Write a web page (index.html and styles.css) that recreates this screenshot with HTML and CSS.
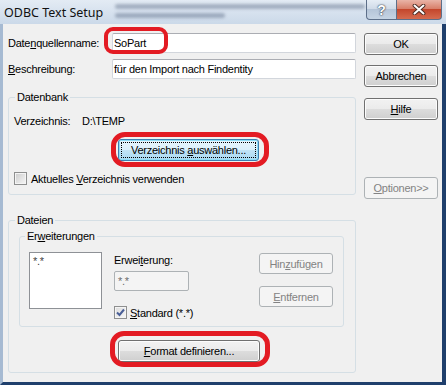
FILE: index.html
```html
<!DOCTYPE html>
<html lang="de">
<head>
    <meta charset="UTF-8">
    <title>ODBC Text Setup</title>
    <link rel="stylesheet" href="styles.css">
</head>
<body>
    <div class="window">
        <div class="titlebar">
            <span class="title">ODBC Text Setup</span>
            <div class="glass">
                <div class="smear wide"></div>
                <div class="smear short"></div>
            </div>
            <div class="caption-buttons">
                <div class="cap help">?</div>
                <div class="cap close">
                    <svg width="14" height="11" viewBox="0 0 14 11">
                        <path d="M2.5 1.5 L11.5 9.5 M11.5 1.5 L2.5 9.5" stroke="#4a2a22" stroke-width="3.8" stroke-linecap="round"/>
                        <path d="M2.5 1.5 L11.5 9.5 M11.5 1.5 L2.5 9.5" stroke="#fff" stroke-width="2" stroke-linecap="round"/>
                    </svg>
                </div>
            </div>
        </div>

        <div class="client">
            <div class="form">
                <div class="row">
                    <span class="label">Date<u>n</u>quellenname:</span>
                    <div class="edit marked name-mark">SoPart</div>
                </div>
                <div class="row second">
                    <span class="label"><u>B</u>eschreibung:</span>
                    <div class="edit">für den Import nach Findentity</div>
                </div>

                <fieldset class="group db">
                    <legend>Datenbank</legend>
                    <div class="dir-row">
                        <span class="dir-label">Verzeichnis:</span>
                        <span>D:\TEMP</span>
                    </div>
                    <div class="btn focus verz marked"><span>Verzeichnis <u>a</u>uswählen...</span></div>
                    <div class="check-row">
                        <span class="check"></span>
                        <span>Aktuelles <u>V</u>erzeichnis verwenden</span>
                    </div>
                </fieldset>

                <fieldset class="group files">
                    <legend>Dateien</legend>
                    <fieldset class="group ext">
                        <legend>Er<u>w</u>eiterungen</legend>
                        <div class="ext-body">
                            <div class="listbox">*.*</div>
                            <div class="ext-middle">
                                <div class="ext-label">Erwei<u>t</u>erung:</div>
                                <div class="edit disabled small">*.*</div>
                                <div class="check-row">
                                    <span class="check checked">
                                        <svg width="11" height="11" viewBox="0 0 11 11">
                                            <path d="M2 5.5 L4.5 8 L9 2.5" fill="none" stroke="#4a5f97" stroke-width="2"/>
                                        </svg>
                                    </span>
                                    <span><u>S</u>tandard (*.*)</span>
                                </div>
                            </div>
                            <div class="ext-buttons">
                                <div class="btn disabled"><span>Hin<u>z</u>ufügen</span></div>
                                <div class="btn disabled"><span><u>E</u>ntfernen</span></div>
                            </div>
                        </div>
                    </fieldset>
                    <div class="btn format marked"><span><u>F</u>ormat definieren...</span></div>
                </fieldset>
            </div>

            <div class="side">
                <div class="btn">OK</div>
                <div class="btn cancel">Abbrechen</div>
                <div class="btn help-btn"><span><u>H</u>ilfe</span></div>
                <div class="btn disabled options"><span><u>O</u>ptionen&gt;&gt;</span></div>
            </div>
        </div>
    </div>
</body>
</html>
```

FILE: styles.css
```css
body {
    margin: 0;
    font-family: "Liberation Sans", Arial, sans-serif;
    font-size: 11px;
    letter-spacing: -0.25px;
    color: #000;
    overflow: hidden;
}
.window {
    width: 446px;
    height: 385px;
    display: flex;
    flex-direction: column;
    background: #d3dfeb;
}

/* title bar */
.titlebar {
    height: 24px;
    flex-shrink: 0;
    display: flex;
    align-items: flex-start;
    background: linear-gradient(#e3ebf4, #cbd9e9);
}
.title {
    font-family: "Noto Sans", sans-serif;
    font-size: 12.5px;
    letter-spacing: 0;
    line-height: 15px;
    padding: 5px 0 0 4px;
    color: #111;
}
.glass {
    flex: 1;
    padding: 4px 0 0 12px;
}
.smear {
    height: 5px;
    border-radius: 3px;
    background: rgba(70, 88, 116, 0.38);
    filter: blur(1.6px);
}
.smear.wide {
    width: 250px;
}
.smear.short {
    width: 110px;
    margin-top: 4px;
}
.caption-buttons {
    display: flex;
    margin-right: 4px;
}
.cap {
    height: 19px;
    border: 1px solid #5d6f89;
    border-top: none;
    display: flex;
    align-items: center;
    justify-content: center;
}
.help {
    width: 29px;
    border-radius: 0 0 0 4px;
    background: linear-gradient(#e6edf5, #d0dbe8 45%, #b5c5d8 50%, #c6d4e4);
    font: bold 14px "Liberation Sans", sans-serif;
    color: #fff;
    text-shadow: 0 0 2px #2a3340, 0 0 1px #2a3340;
}
.close {
    width: 44px;
    border-left: none;
    border-radius: 0 0 4px 0;
    background: linear-gradient(#e9b4a7, #d8806b 45%, #c4472d 50%, #d56b4f);
}

/* client area */
.client {
    flex: 1;
    display: flex;
    align-items: flex-start;
    background: #f0f0f0;
    border-left: 3px solid #a6bad2;
    border-right: 4px solid #1f3f6c;
    border-bottom: 3px solid #1f3f6c;
    padding: 9px 0 0 5px;
}
.form {
    width: 348px;
}
.row {
    display: flex;
    align-items: center;
    height: 20px;
}
.row.second {
    margin-top: 6px;
}
.label {
    width: 104px;
}
.edit {
    box-sizing: border-box;
    width: 244px;
    height: 20px;
    padding-left: 1px;
    display: flex;
    align-items: center;
    background: #fff;
    border: 1px solid #d2d6dc;
    border-top-color: #abadb3;
    border-radius: 2px;
}
.edit.small {
    width: 75px;
    margin-top: 4px;
    padding-left: 3px;
}
.edit.disabled {
    background: #f4f4f4;
    border-color: #adb2b5;
    color: #6d6d6d;
}

/* group boxes */
.group {
    margin: 0;
    min-width: 0;
    border: 1px solid #d5dfe5;
    border-radius: 3px;
}
.group legend {
    padding: 0 2px;
    line-height: 13px;
}
.db {
    margin-top: 12px;
    padding: 0 0 9px 5px;
}
.db legend {
    margin-left: 1px;
}
.dir-row {
    display: flex;
    margin-top: 11px;
    line-height: 13px;
}
.dir-label {
    width: 68px;
}
.check-row {
    display: flex;
    align-items: center;
    height: 13px;
    margin-top: 11px;
}
.check {
    box-sizing: border-box;
    width: 13px;
    height: 13px;
    margin-right: 4px;
    border: 1px solid #8e8f8f;
    background: linear-gradient(135deg, #cbcbcb, #f7f7f7);
    box-shadow: inset 0 0 0 1px #f4f4f4;
}
.check.checked {
    margin-right: 3px;
    background: linear-gradient(135deg, #dcdcdc, #f7f7f7);
}
.check svg {
    display: block;
}
.files {
    margin-top: 19px;
    padding: 0 11px 10px 10px;
}
.files legend {
    margin-left: -4px;
}
.ext {
    margin-top: 3px;
    padding: 0 10px 7px 9px;
}
.ext legend {
    margin-left: -4px;
}
.ext-body {
    display: flex;
    align-items: flex-start;
    padding-top: 9px;
}
.listbox {
    box-sizing: border-box;
    width: 73px;
    height: 57px;
    padding: 3px 0 0 3px;
    line-height: 11px;
    background: #fff;
    border: 1px solid #8e9196;
    color: #444;
}
.ext-middle {
    margin-left: 12px;
    padding-top: 2px;
}
.ext-label {
    line-height: 13px;
}
.ext-middle .check-row {
    margin-top: 15px;
}
.ext-buttons {
    margin-left: auto;
    padding-top: 1px;
}
.ext-buttons .btn {
    width: 74px;
    height: 21px;
}
.ext-buttons .btn + .btn {
    margin-top: 12px;
}

/* buttons */
.btn {
    box-sizing: border-box;
    height: 22px;
    display: flex;
    align-items: center;
    justify-content: center;
    border: 1px solid #707070;
    border-radius: 3px;
    background: linear-gradient(#f2f2f2, #ebebeb 49%, #dddddd 50%, #cfcfcf);
    box-shadow: inset 0 0 0 1px #fcfcfc;
}
.btn.focus {
    border-color: #3c7fb1;
    background: linear-gradient(#e8f5fc, #dbf0fb 49%, #c2e4f6 50%, #a9d9f2);
    box-shadow: inset 0 0 0 1px #8fdcf6;
    outline: 1px dotted #000;
    outline-offset: -4px;
}
.btn.disabled {
    border-color: #adb2b5;
    background: #f4f4f4;
    box-shadow: none;
    color: #838383;
}
.verz {
    width: 141px;
    margin: 11px 0 0 104px;
}
.format {
    width: 142px;
    margin: 13px 0 0 99px;
}
.side {
    width: 74px;
    margin-left: 8px;
    display: flex;
    flex-direction: column;
}
.cancel {
    margin-top: 10px;
}
.help-btn {
    margin-top: 11px;
}
.options {
    margin-top: 57px;
}

/* red highlight marks drawn over the screenshot */
.marked {
    position: relative;
}
.marked::after {
    content: "";
    position: absolute;
    border: 5px solid #e31b23;
    border-radius: 14px;
    pointer-events: none;
}
.name-mark::after {
    left: -9px;
    top: -7px;
    width: 56px;
    height: 19px;
    border-width: 4px;
    border-radius: 9px;
}
.verz::after {
    left: -8px;
    top: -8px;
    right: -11px;
    bottom: -7px;
}
.format::after {
    left: -9px;
    top: -10px;
    right: -11px;
    bottom: -6px;
}
```
